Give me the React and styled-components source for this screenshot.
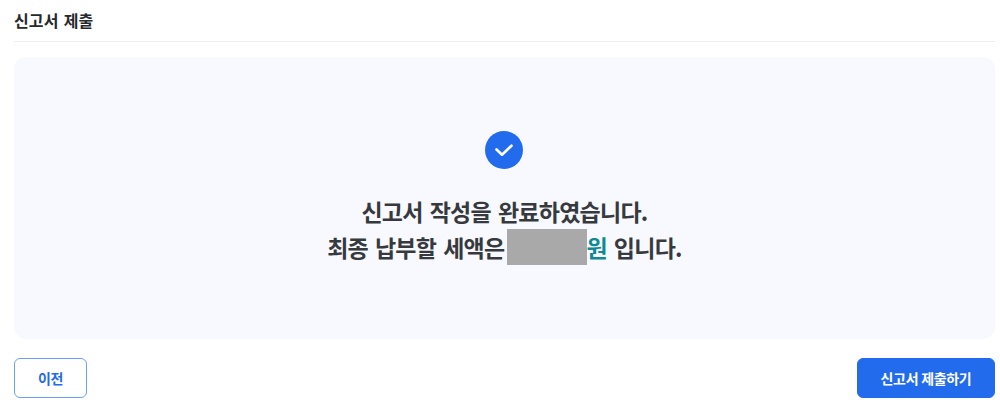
import React from "react";
import styled, { createGlobalStyle } from "styled-components";

const Global = createGlobalStyle`
  html, body { margin: 0; padding: 0; background: #fff; }
  body { font-family: "Noto Sans CJK KR", "Noto Sans", sans-serif; }
`;

const Page = styled.div`
  width: 1000px;
  height: 409px;
  box-sizing: border-box;
  padding: 0 5px 0 14px;
  overflow: hidden;
`;

const Header = styled.div`
  height: 41px;
  box-sizing: content-box;
  border-bottom: 1px solid #eceef1;
  display: flex;
  align-items: flex-start;
`;

const Title = styled.h2`
  margin: 8px 0 0;
  font-size: 16px;
  line-height: 24px;
  font-weight: 700;
  color: #26282b;
  letter-spacing: 0.1px;
  word-spacing: 1.5px;
`;

const Panel = styled.div`
  margin-top: 15px;
  height: 282px;
  border-radius: 12px;
  background: #f8f9ff;
  display: flex;
  flex-direction: column;
  align-items: center;
  padding-top: 74px;
  box-sizing: border-box;
`;

const CheckIcon = styled.svg`
  width: 38px;
  height: 38px;
  display: block;
  margin-left: -1px;
`;

const Message = styled.div`
  margin-top: 24px;
  font-size: 23px;
  line-height: 36px;
  font-weight: 700;
  color: #36393d;
  text-align: center;
  letter-spacing: -0.74px;
  word-spacing: 2.5px;
`;

const Line = styled.div`
  display: flex;
  justify-content: center;
  align-items: center;
  height: 36px;
  white-space: pre;
`;

const Masked = styled.span`
  display: inline-block;
  width: 80px;
  height: 36px;
  background: #a9a9a9;
  margin-left: 3px;
`;

const Unit = styled.span`
  color: #0f8a94;
  margin-left: -1px;
`;

const Footer = styled.div`
  margin-top: 19px;
  display: flex;
  justify-content: space-between;
`;

const Button = styled.button`
  height: 40px;
  width: ${(p) => p.$width}px;
  border-radius: 6px;
  box-sizing: border-box;
  font-family: inherit;
  font-size: 14px;
  font-weight: 700;
  letter-spacing: -0.3px;
  padding: 0;
  border: 1px solid ${(p) => (p.$primary ? "#236bed" : "#6c9ff5")};
  background: ${(p) => (p.$primary ? "#236bed" : "#fff")};
  color: ${(p) => (p.$primary ? "#fff" : "#236bed")};
`;

export default function App() {
  return (
    <Page>
      <Global />
      <Header>
        <Title>신고서 제출</Title>
      </Header>
      <Panel>
        <CheckIcon viewBox="0 0 38 38" aria-hidden="true">
          <circle cx="19" cy="19" r="19" fill="#236bed" />
          <path d="M11.5 18.5l5.5 5.2 9.5-9" fill="none" stroke="#fff" strokeWidth="2.6" strokeLinecap="round" strokeLinejoin="round" />
        </CheckIcon>
        <Message>
          <Line>신고서 작성을 완료하였습니다.</Line>
          <Line>
            최종 납부할 세액은<Masked /><Unit>원</Unit> 입니다.
          </Line>
        </Message>
      </Panel>
      <Footer>
        <Button $width={73}>이전</Button>
        <Button $primary $width={138}>신고서 제출하기</Button>
      </Footer>
    </Page>
  );
}
